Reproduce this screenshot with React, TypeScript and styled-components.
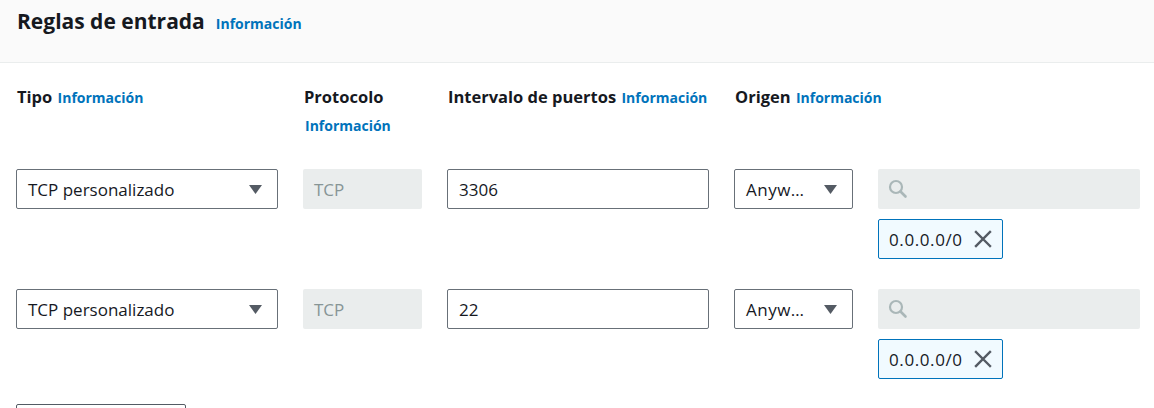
import React from "react";
import styled, { createGlobalStyle } from "styled-components";

const Global = createGlobalStyle`
  html, body { margin: 0; padding: 0; background: #ffffff; }
  body { font-family: "Open Sans", "Noto Sans", Arial, sans-serif; color: #16191f; }
  * { box-sizing: border-box; }
`;

const Page = styled.div`
  width: 1154px;
  height: 408px;
  overflow: hidden;
  background: #ffffff;
`;

const Header = styled.div`
  height: 63px;
  background: #fafafa;
  border-bottom: 1px solid #eaeded;
  padding: 5px 17px 0;
  display: flex;
  align-items: baseline;
  gap: 11px;
`;

const Title = styled.h2`
  margin: 0;
  font-size: 21px;
  line-height: 32px;
  font-weight: 700;
  color: #16191f;
`;

const InfoLink = styled.a`
  font-size: 14px;
  font-weight: 700;
  color: #0073bb;
  text-decoration: none;
`;

const Grid = styled.div`
  display: grid;
  grid-template-columns: 262px 119px 262px 119px 262px;
  column-gap: 25px;
  padding: 20px 14px 0 16px;
`;

const Label = styled.div<{ $span?: boolean }>`
  font-size: 16.5px;
  font-weight: 700;
  line-height: 28px;
  padding-left: 1px;
  color: #16191f;
  grid-column: ${(p) => (p.$span ? "span 2" : "span 1")};
  & ${InfoLink} { margin-left: 1px; }
`;

const RowGap = styled.div<{ $h: number }>`
  grid-column: 1 / -1;
  height: ${(p) => p.$h}px;
`;

const Box = styled.div`
  height: 40px;
  display: flex;
  align-items: center;
  font-size: 17px;
  border-radius: 2px;
`;

const Select = styled(Box)`
  border: 1px solid #687078;
  background: #ffffff;
  padding: 0 15px 0 11px;
  justify-content: space-between;
  color: #16191f;
`;

const Disabled = styled(Box)`
  background: #eaeded;
  color: #879596;
  padding: 0 11px;
`;

const Input = styled(Box)`
  border: 1px solid #687078;
  background: #ffffff;
  padding: 0 11px;
`;

const Search = styled(Box)`
  background: #eaeded;
  padding: 0 10px;
`;

const Caret = styled.svg`
  width: 13px;
  height: 9px;
  flex: none;
`;

const TokenCell = styled.div`
  grid-column: 5;
  margin-top: 10px;
`;

const Token = styled.div`
  display: inline-flex;
  align-items: center;
  height: 40px;
  width: 125px;
  border: 1px solid #0073bb;
  background: #f1faff;
  border-radius: 2px;
  padding: 0 10px;
  font-size: 17px;
  letter-spacing: 0.6px;
  justify-content: space-between;
`;

const AddButton = styled.div`
  grid-column: 1;
  width: 170px;
  height: 32px;
  border: 1px solid #545b64;
  border-radius: 2px;
  margin-top: 25px;
`;

const Ellipsis = styled.span`
  letter-spacing: 0.5px;
`;

const CaretIcon = () => (
  <Caret viewBox="0 0 13 9">
    <path d="M0 0 L13 0 L6.5 9 Z" fill="#545b64" />
  </Caret>
);

const SearchIcon = () => (
  <svg width="20" height="20" viewBox="0 0 20 20">
    <circle cx="8" cy="8" r="6" fill="none" stroke="#aab7b8" strokeWidth="2.2" />
    <path d="M12.5 12.5 L17.5 17.5" stroke="#aab7b8" strokeWidth="2.6" strokeLinecap="round" />
  </svg>
);

const CloseIcon = () => (
  <svg width="18" height="18" viewBox="0 0 18 18">
    <path d="M2 2 L16 16 M16 2 L2 16" stroke="#545b64" strokeWidth="2.4" strokeLinecap="square" />
  </svg>
);

const rules = ["3306", "22"];

export default function App() {
  return (
    <Page>
      <Global />
      <Header>
        <Title>Reglas de entrada</Title>
        <InfoLink>Información</InfoLink>
      </Header>
      <Grid>
        <Label>
          Tipo <InfoLink>Información</InfoLink>
        </Label>
        <Label>
          Protocolo <InfoLink>Información</InfoLink>
        </Label>
        <Label>
          Intervalo de puertos <InfoLink>Información</InfoLink>
        </Label>
        <Label $span>
          Origen <InfoLink>Información</InfoLink>
        </Label>
        <RowGap $h={29} />
        {rules.map((port, i) => (
          <React.Fragment key={port}>
            {i > 0 && <RowGap $h={30} />}
            <Select>
              <span>TCP personalizado</span>
              <CaretIcon />
            </Select>
            <Disabled>TCP</Disabled>
            <Input>{port}</Input>
            <Select>
              <Ellipsis>Anyw…</Ellipsis>
              <CaretIcon />
            </Select>
            <Search>
              <SearchIcon />
            </Search>
            <TokenCell>
              <Token>
                <span>0.0.0.0/0</span>
                <CloseIcon />
              </Token>
            </TokenCell>
          </React.Fragment>
        ))}
        <AddButton />
      </Grid>
    </Page>
  );
}
